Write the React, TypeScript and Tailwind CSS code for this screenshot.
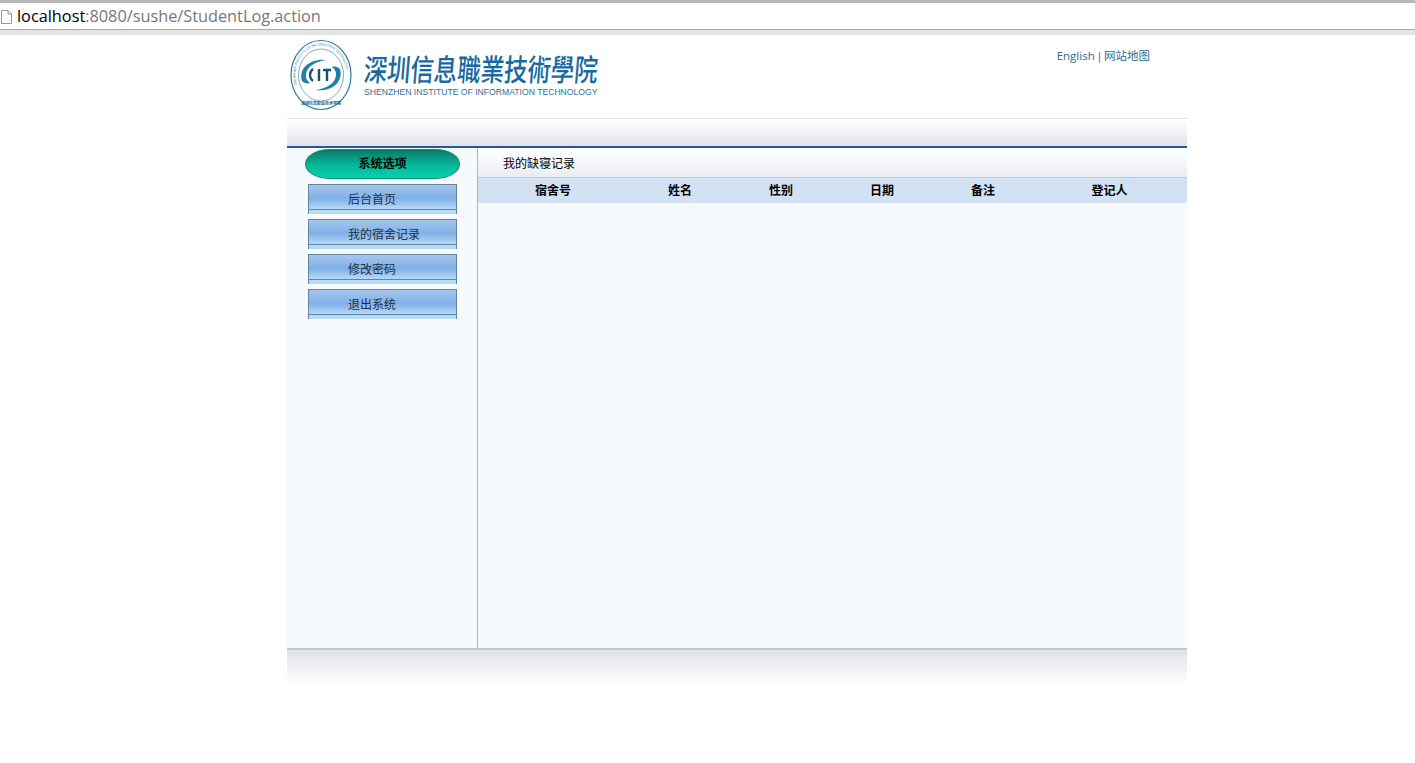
const menuItems = ['后台首页', '我的宿舍记录', '修改密码', '退出系统'];

const columns = [
  { label: '宿舍号', width: 'w-[150px]' },
  { label: '姓名', width: 'w-[104px]' },
  { label: '性别', width: 'w-[98px]' },
  { label: '日期', width: 'w-[104px]' },
  { label: '备注', width: 'w-[98px]' },
  { label: '登记人', width: 'w-[155px]' },
];

const cjk = "font-['Liberation_Sans','Noto_Sans_CJK_SC',sans-serif]";

const Seal = () => (
  <svg width="62" height="72" viewBox="0 0 62 72" className="shrink-0">
    <defs>
      <path id="sealTop" d="M7 46 A25.500 29.500 0 1 1 55 46" />
    </defs>
    <ellipse cx="31" cy="36" rx="30" ry="34.500" fill="#fbfdfe" stroke="#2b7d9c" strokeWidth="1.200" />
    <ellipse cx="31" cy="36" rx="22.500" ry="26" fill="#fff" stroke="#5a9db5" strokeWidth="0.800" />
    <text fontSize="3.400" fill="#4d8aa3" fontFamily="Liberation Sans, sans-serif">
      <textPath href="#sealTop">SHENZHEN INSTITUTE OF INFORMATION TECHNOLOGY</textPath>
    </text>
    <text x="31" y="66" textAnchor="middle" fontSize="4" fill="#1d5f7f" fontWeight="700" fontFamily="Noto Sans CJK SC, sans-serif">
      深圳信息职业技术学院
    </text>
    {/* swoosh mark */}
    <path d="M12 42 C8 28 22 19 36 21 C30 22 17 25 16 36 C15.500 39 17 42 20 44 C17 45 14 44 12 42Z" fill="#1f7fa8" />
    <path d="M50 30 C54 44 40 53 26 51 C32 50 45 47 46 36 C46.500 33 45 30 42 28 C45 27 48 28 50 30Z" fill="#1f7fa8" />
    <path d="M23 30 C19 33 19 39 23 42" fill="none" stroke="#174f78" strokeWidth="2.200" />
    <path d="M29 30 V42 M33 31 H41 M37 31 V42" fill="none" stroke="#174f78" strokeWidth="2.400" />
  </svg>
);

const App = () => {
  return (
    <div className={`min-h-[763px] bg-white ${cjk}`}>
      {/* browser address bar */}
      <div className="h-[35px] border-t-[3px] border-[#b8b8b8] bg-white">
        <div className="flex h-[26px] items-center pl-[1px]">
          <svg width="11" height="14" viewBox="0 0 11 14" className="mt-[2px] shrink-0">
            <path d="M.5.500H7L10.500 4V13.500H.5Z M7 .5V4H10.500" fill="#fff" stroke="#9a9a9a" />
          </svg>
          <div className="ml-[5px] font-['Open_Sans',sans-serif] text-[16.300px] leading-[20px] text-[#777]">
            <span className="text-black">localhost</span>:8080/sushe/StudentLog.action
          </div>
        </div>
        <div className="h-[6px] border-t border-[#aaa] bg-[#e4e4e4]" />
      </div>

      <div className="ml-[287px] w-[900px]">
        {/* logo header */}
        <header className="flex h-[84px] justify-between border-b border-[#e0e0e0]">
          <div className="flex pt-[4px] pl-[3px]">
            <Seal />
            <div className="ml-[12px] pt-[13px]">
              <div className="origin-left -skew-x-6 scale-y-[1.3] font-['Noto_Sans_CJK_TC',serif] text-[23.400px] leading-[32px] font-medium whitespace-nowrap text-[#17699f]">
                深圳信息職業技術學院
              </div>
              <div className="mt-[3px] text-[8.650px] leading-[10px] whitespace-nowrap text-[#2d6f9c]">
                SHENZHEN INSTITUTE OF INFORMATION TECHNOLOGY
              </div>
            </div>
          </div>
          <div className="pt-[12px] pr-[37px] font-['Open_Sans','Noto_Sans_CJK_SC',sans-serif] text-[11.500px] leading-[18px] text-[#2b6b8f] [word-spacing:-1.500px]">
            English | 网站地图
          </div>
        </header>

        {/* nav band */}
        <div className="h-[29px] border-b-2 border-[#26589b] bg-gradient-to-b from-white to-[#dfe4ea]" />

        <div className="flex h-[500px] bg-[#f6fafe]">
          {/* sidebar */}
          <aside className="flex w-[191px] flex-col items-center border-r border-[#a9b8c8] pl-[2px]">
            <div className="mt-[1px] mr-[1px] flex h-[30px] w-[155px] items-center justify-center rounded-[24px/15px] border border-[#0a8f78] bg-gradient-to-b from-[#067a68] via-[#09b396] via-50% to-[#06d0ae] text-[12px] font-bold text-black">
              系统选项
            </div>
            <nav className="mt-[5px] mr-[1px] flex flex-col gap-[5px]">
              {menuItems.map((item) => (
                <a
                  key={item}
                  href="#"
                  className="flex h-[30px] w-[149px] flex-col border-x border-t border-[#62859f]"
                >
                  <span className="flex h-[24px] items-end bg-gradient-to-b from-[#a6c6ec] via-[#7fb0e8] via-55% to-[#b8d8f8] pl-[39px] text-[12px] leading-[18px] text-[#1d2f42]">
                    {item}
                  </span>
                  <span className="h-[5px] border-t border-[#62859f] bg-[#b5dcf5]" />
                </a>
              ))}
            </nav>
          </aside>

          {/* main */}
          <main className="flex-1">
            <div className="flex h-[30px] items-center border-b border-[#bccbd8] bg-gradient-to-b from-white to-[#e9eef4] pt-[2px] pl-[25px] text-[12px] text-black">
              我的缺寝记录
            </div>
            <div className="flex h-[25px] bg-[#d3e2f3]">
              {columns.map((col) => (
                <div key={col.label} className={`${col.width} pt-[1px] text-center text-[12px] leading-[25px] font-bold text-black`}>
                  {col.label}
                </div>
              ))}
            </div>
          </main>
        </div>

        {/* footer band */}
        <footer className="h-[37px] border-t-2 border-[#c3c8c9] bg-gradient-to-b from-[#dee3ea] to-white" />
      </div>
    </div>
  );
};

export default App;
